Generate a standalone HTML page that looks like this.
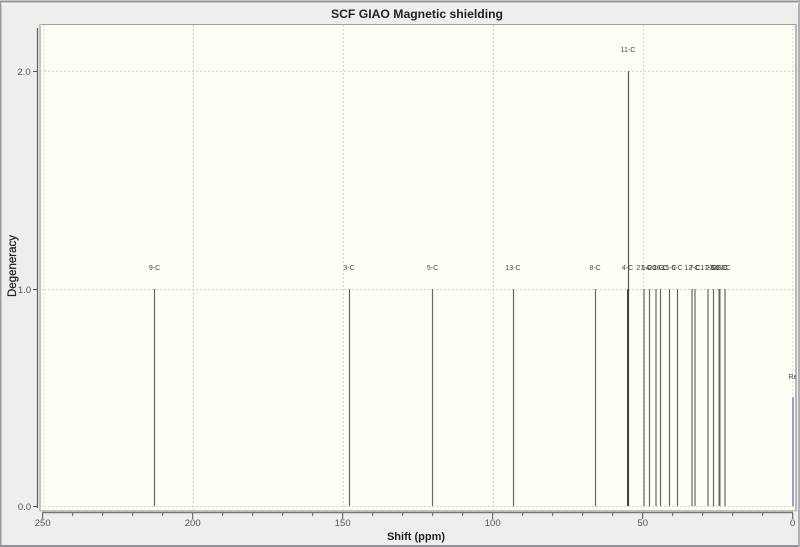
<!DOCTYPE html>
<html>
<head>
<meta charset="utf-8">
<style>
html,body{margin:0;padding:0;background:#eeeeef;}
svg{display:block;}
text{font-family:"Liberation Sans",sans-serif;}
.l{font-size:7px;fill:#444;text-anchor:middle;}
.t{font-size:9.5px;fill:#555;text-anchor:middle;}
.s{stroke:#666;stroke-width:1.2;fill:none;}
</style>
</head>
<body>
<svg width="800" height="547" viewBox="0 0 800 547" xmlns="http://www.w3.org/2000/svg">
<rect x="0" y="0" width="800" height="547" fill="#eeeeef"/>
<!-- window frame -->
<path d="M0.5 546V1.5H799" stroke="#9a9aa2" stroke-width="2" fill="none"/>
<rect x="0" y="545" width="800" height="2" fill="#8f9296"/>
<rect x="798" y="0" width="2" height="547" fill="#b0b0b4"/>
<rect x="1" y="3" width="798" height="1" fill="#f6f6f8"/>
<!-- plot -->
<rect x="40" y="24" width="756" height="487" fill="#fffff5"/>
<rect x="39" y="24" width="757" height="1" fill="#a0a0a0"/>
<rect x="39" y="24" width="2" height="487" fill="#c4c4bc"/>
<rect x="795" y="24" width="2" height="487" fill="#b8b8b8"/>
<rect x="39" y="510" width="758" height="1.5" fill="#c4c4bc"/>
<!-- grid -->
<g stroke="#d0d0c4" stroke-width="1" stroke-dasharray="2 2" fill="none">
<path d="M44 25V510M193.5 25V510M343.5 25V510M493.5 25V510M643.5 25V510M793 25V510"/>
<path d="M40 71.5H795M40 289.5H795M40 506.5H795"/>
</g>
<!-- axes -->
<path d="M37.5 28V508" stroke="#606060" stroke-width="1.2" fill="none"/>
<path d="M33 71.5H38M33 289.5H38M33 506.5H38" stroke="#555" stroke-width="1" fill="none"/>
<path d="M42 512.5H793" stroke="#777" stroke-width="1.4" fill="none"/>
<path d="M42.7 513V519M192.7 513V519M342.7 513V519M492.7 513V519M642.7 513V519M792.7 513V519" stroke="#555" stroke-width="1" fill="none"/>
<path d="M72.7 513V516M102.7 513V516M132.7 513V516M162.7 513V516M222.7 513V516M252.7 513V516M282.7 513V516M312.7 513V516M372.7 513V516M402.7 513V516M432.7 513V516M462.7 513V516M522.7 513V516M552.7 513V516M582.7 513V516M612.7 513V516M672.7 513V516M702.7 513V516M732.7 513V516M762.7 513V516" stroke="#555" stroke-width="1" fill="none"/>
<!-- sticks -->
<path class="s" d="M154.5 289V506M349.5 289V506M432.5 289V506M513.5 289V506M595.5 289V506M644 289V506M649.5 289V506M656 289V506M660.5 289V506M669.5 289V506M677.5 289V506M692 289V506M695 289V506M708 289V506M713.5 289V506M725 289V506"/>
<path d="M628.5 71V506" stroke="#555" stroke-width="1.2" fill="none"/>
<path d="M628 289V506" stroke="#444" stroke-width="2" fill="none"/>
<path d="M719.5 289V506" stroke="#666" stroke-width="2" fill="none"/>
<path d="M793 397V506" stroke="#7b7bc0" stroke-width="1.5" fill="none"/>
<!-- labels -->
<text class="l" x="628" y="52">11-C</text>
<text class="l" x="154.5" y="270">9-C</text>
<text class="l" x="349" y="270">3-C</text>
<text class="l" x="432.5" y="270">5-C</text>
<text class="l" x="513" y="270">13-C</text>
<text class="l" x="595" y="270">8-C</text>
<text class="l" x="627.5" y="270">4-C</text>
<text class="l" x="644" y="270">21-C</text>
<text class="l" x="649.5" y="270">14-C</text>
<text class="l" x="656" y="270">20-C</text>
<text class="l" x="660.5" y="270">16-C</text>
<text class="l" x="669" y="270">15-C</text>
<text class="l" x="677" y="270">6-C</text>
<text class="l" x="692" y="270">12-C</text>
<text class="l" x="695" y="270">7-C</text>
<text class="l" x="708" y="270">17-C</text>
<text class="l" x="713.5" y="270">23-C</text>
<text class="l" x="719" y="270">18-C</text>
<text class="l" x="720.5" y="270">22-C</text>
<text class="l" x="725" y="270">2-C</text>
<svg x="0" y="0" width="796" height="547"><text class="l" x="793" y="379">Re</text></svg>
<!-- axis numbers -->
<text class="t" x="24" y="75">2.0</text>
<text class="t" x="24.5" y="293">1.0</text>
<text class="t" x="24.5" y="510">0.0</text>
<text class="t" x="42.7" y="526">250</text>
<text class="t" x="192.7" y="526">200</text>
<text class="t" x="342.7" y="526">150</text>
<text class="t" x="492.7" y="526">100</text>
<text class="t" x="642.7" y="526">50</text>
<text class="t" x="792.7" y="526">0</text>
<!-- titles -->
<text x="417" y="18" text-anchor="middle" font-size="12.2" font-weight="bold" fill="#222">SCF GIAO Magnetic shielding</text>
<text x="416" y="540" text-anchor="middle" font-size="11" font-weight="bold" fill="#222">Shift (ppm)</text>
<text transform="translate(16 266) rotate(-90)" text-anchor="middle" font-size="11.5" fill="#222" stroke="#222" stroke-width="0.25">Degeneracy</text>
</svg>
</body>
</html>
